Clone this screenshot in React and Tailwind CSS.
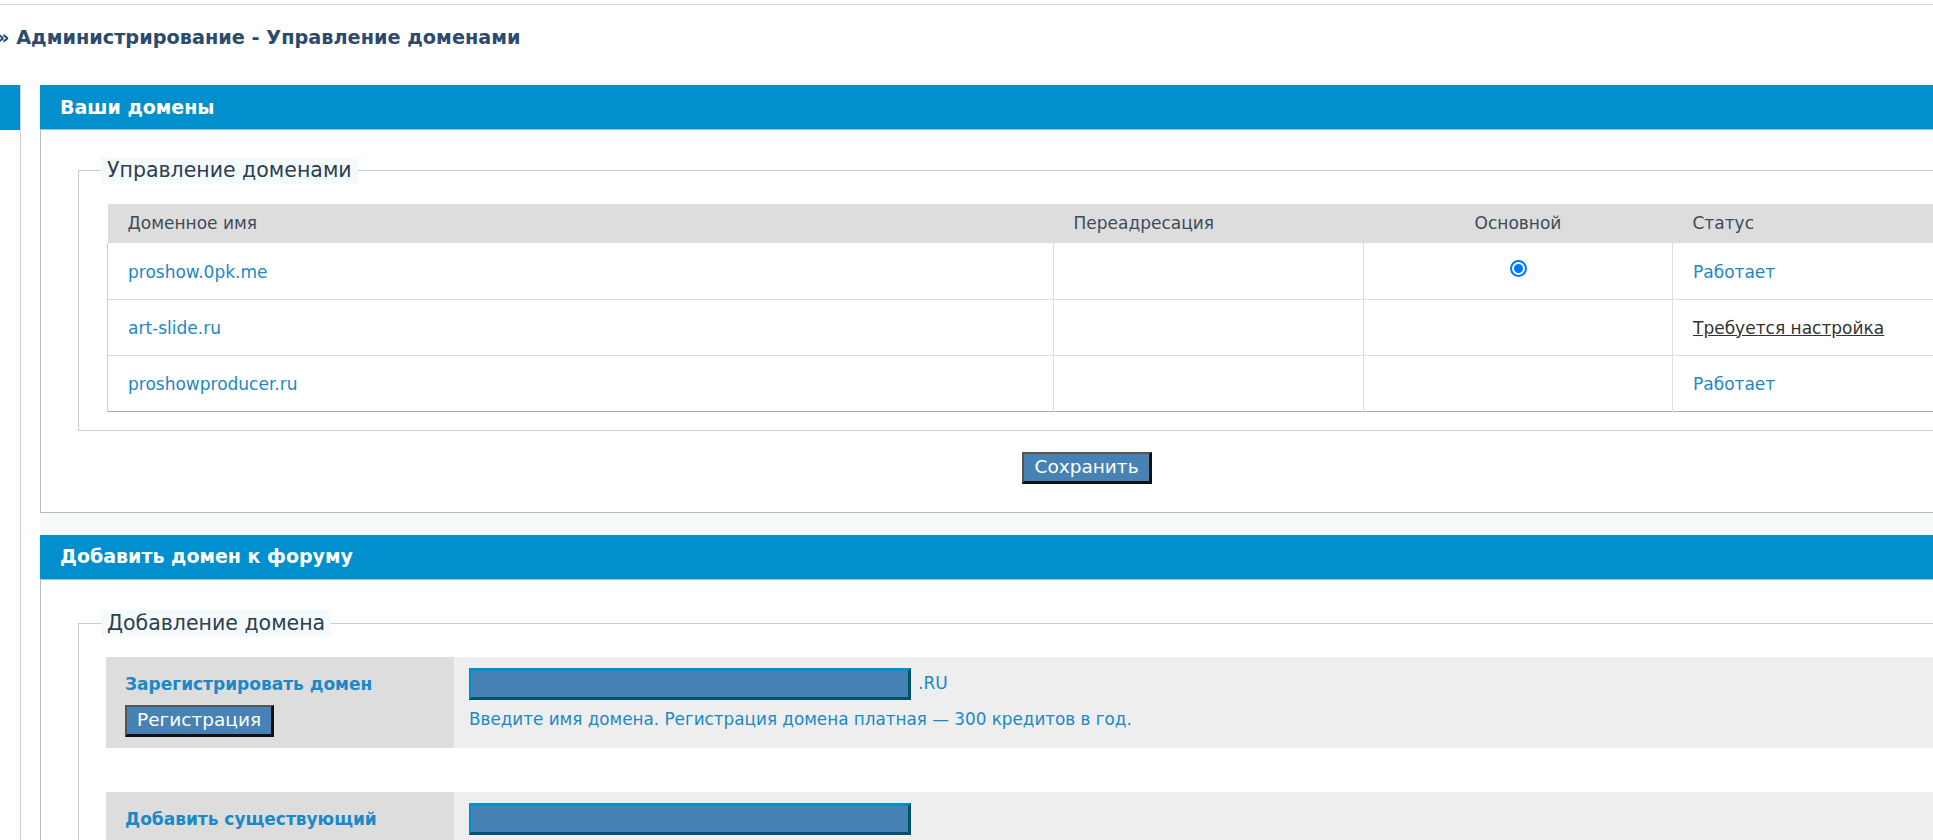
import React from 'react';

const domains = [
  { name: 'proshow.0pk.me', main: true, status: 'ok' },
  { name: 'art-slide.ru', main: false, status: 'setup' },
  { name: 'proshowproducer.ru', main: false, status: 'ok' },
];

const btn =
  "h-[32px] bg-[#4682b4] text-white text-[18.5px] leading-none border-[3px] border-t-[#555] border-l-[#555] border-b-[#111] border-r-[#111] border-t-2 border-l-2";

const field =
  "h-[32px] w-[442px] bg-[#4682b4] border-t-[3px] border-l-2 border-b-[3px] border-r-[3px] border-t-[#0090cd] border-l-[#0090cd] border-b-[#00506e] border-r-[#00506e]";

const Header = ({ children }) => (
  <div className="h-[45px] bg-[#0190cd] border-b border-[#8cc8e4] pl-[20px] flex items-center text-white font-bold text-[19px]">
    {children}
  </div>
);

const Legend = ({ children }) => (
  <legend className="ml-[22px] px-[6px] bg-[#f5fbfd] text-[20.5px] leading-[27px] text-[#2c3e50]">
    {children}
  </legend>
);

const AddRow = ({ title, button, hint, suffix }) => (
  <div className="flex h-[91px]">
    <div className="w-[348px] shrink-0 bg-[#dddddd] pl-[19px] pt-[16px]">
      <div className="text-[17px] leading-[22px] font-bold text-[#1a88c9]">{title}</div>
      <button className={`${btn} mt-[10px] px-[10px]`}>{button}</button>
    </div>
    <div className="flex-1 bg-[#eeeeee] pl-[15px] pt-[11px]">
      <div className="flex items-center">
        <div className={field} />
        {suffix && <span className="ml-[7px] text-[17px] text-[#1a88c9]">{suffix}</span>}
      </div>
      {hint && <div className="mt-[8px] text-[16.8px] leading-[22px] text-[#1a88c9]">{hint}</div>}
    </div>
  </div>
);

const Radio = () => (
  <span className="w-[17px] h-[17px] rounded-full border-2 border-[#0075ff] bg-white flex items-center justify-center">
    <span className="w-[9px] h-[9px] rounded-full bg-[#0075ff]" />
  </span>
);

export default function App() {
  return (
    <div className="w-[1933px] h-[840px] overflow-hidden bg-white font-['DejaVu_Sans',sans-serif]">
      <div className="h-[4px]" />
      <div className="h-px bg-[#c5dede]" />
      <div className="h-[80px] pt-[21px]">
        <h1 className="-ml-[3px] text-[19.3px] leading-[24px] font-bold text-[#2b4a6e]">
          » Администрирование - Управление доменами
        </h1>
      </div>

      <div className="flex">
        <aside className="w-[21px] shrink-0 border-r border-[#c8d4dc] h-[800px]">
          <div className="h-[45px] bg-[#0190cd]" />
        </aside>

        <main className="w-[2094px] shrink-0 ml-[19px]">
          <Header>Ваши домены</Header>
          <div className="bg-white border-l border-r border-b border-[#bbbbbb] pt-[27px] px-[37px] pb-[28px]">
            <fieldset className="border border-[#cccccc] pb-[18px]">
              <Legend>Управление доменами</Legend>
              <div className="px-[28px] pt-[20px]">
                <table className="table-fixed w-full border-collapse text-[17px]">
                  <colgroup>
                    <col className="w-[946px]" />
                    <col className="w-[310px]" />
                    <col className="w-[309px]" />
                    <col />
                  </colgroup>
                  <thead>
                    <tr className="bg-[#dddddd] text-[#3d4b5c]">
                      <th className="h-[39px] text-left font-normal pl-[20px]">Доменное имя</th>
                      <th className="h-[39px] text-left font-normal pl-[20px]">Переадресация</th>
                      <th className="h-[39px] text-center font-normal">Основной</th>
                      <th className="h-[39px] text-left font-normal pl-[20px]">Статус</th>
                    </tr>
                  </thead>
                  <tbody>
                    {domains.map((d, i) => (
                      <tr
                        key={d.name}
                        className={`border-b ${i === domains.length - 1 ? 'border-[#aaaaaa]' : 'border-[#dddddd]'}`}
                      >
                        <td className="h-[56px] pl-[20px] pt-[3px] border-l border-[#cccccc]">
                          <a className="text-[#1a88c9]">{d.name}</a>
                        </td>
                        <td className="h-[56px] border-l border-[#dddddd]" />
                        <td className="h-[56px] border-l border-[#dddddd] align-top">
                          {d.main && (
                            <div className="flex justify-center pt-[17px]">
                              <Radio />
                            </div>
                          )}
                        </td>
                        <td className="h-[56px] pl-[20px] pt-[3px] border-l border-[#dddddd]">
                          {d.status === 'ok' ? (
                            <a className="text-[#1a88c9]">Работает</a>
                          ) : (
                            <a className="text-[#333333] underline">Требуется настройка</a>
                          )}
                        </td>
                      </tr>
                    ))}
                  </tbody>
                </table>
              </div>
            </fieldset>
            <button className={`${btn} block mx-auto mt-[21px] w-[130px]`}>Сохранить</button>
          </div>

          <div className="h-[22px] bg-[#f6fafb]" />

          <Header>Добавить домен к форуму</Header>
          <div className="bg-white border-l border-r border-[#bbbbbb] pt-[30px] px-[37px] pb-[30px]">
            <fieldset className="border border-[#cccccc] pb-[19px]">
              <Legend>Добавление домена</Legend>
              <div className="px-[27px] pt-[20px]">
                <AddRow
                  title="Зарегистрировать домен"
                  button="Регистрация"
                  suffix=".RU"
                  hint="Введите имя домена. Регистрация домена платная — 300 кредитов в год."
                />
                <div className="h-[44px]" />
                <AddRow title="Добавить существующий" button="Добавить" />
              </div>
            </fieldset>
          </div>
        </main>
      </div>
    </div>
  );
}
